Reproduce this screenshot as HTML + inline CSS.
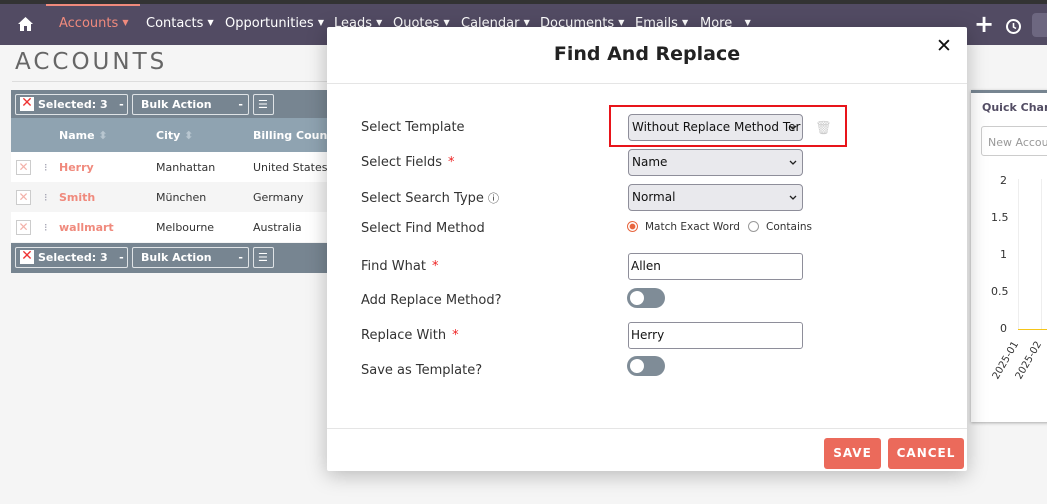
<!DOCTYPE html><html><head><style>
*{box-sizing:border-box;margin:0;padding:0}
body{width:1047px;height:504px;overflow:hidden;background:#f5f5f5;font-family:"DejaVu Sans","Liberation Sans",sans-serif;position:relative;font-size:12px;color:#333}
.abs{position:absolute;white-space:nowrap}
.nav{left:0;top:0;width:1047px;height:45px;background:#524b63;border-top:4px solid #333}
.nav span{position:absolute;top:12px;color:#fff;font-size:13px}
.nav span i{font-style:normal;font-size:8px;vertical-align:2px}
.tb{background:#778591;left:11px;width:316px;height:28px}
.btn{position:absolute;top:4px;height:21px;border:1px solid #dfe3e6;border-radius:2px;color:#fff;font-weight:bold;font-size:11px;line-height:19px;padding-left:8px}
.row{left:11px;width:316px;height:30px;font-size:11px;overflow:hidden}
.row span{position:absolute;top:9px}
.xb{position:absolute;left:5px;top:8px;width:15px;height:15px;border:1px solid #ccc;background:#fff;color:#f3b1a9;font-size:12px;line-height:13px;text-align:center}
.lbl{position:absolute;left:361px;top:1px;font-size:13px;color:#333}
.sel{position:absolute;left:628px;width:175px;height:27px;border:1px solid #8e8e9a;border-radius:4px;background:#e9e9ed;font-size:12px;line-height:25px;padding-left:3px;color:#111;overflow:hidden;white-space:nowrap}
.sel svg{position:absolute;right:5px;top:10px}
.inp{position:absolute;left:628px;width:175px;height:27px;border:1px solid #8e8e9a;border-radius:3px;background:#fff;font-size:12px;line-height:25px;padding-left:2px;color:#111}
.tog{position:absolute;left:627px;width:38px;height:20px;border-radius:10px;background:#7f8c97}
.tog:after{content:"";position:absolute;left:3px;top:3px;width:14px;height:14px;border-radius:50%;background:#fff}
.req{color:#e22;margin-left:6px}
.fb{position:absolute;top:437px;height:31px;background:#eb6a5b;color:#fff;font-weight:bold;font-size:12px;letter-spacing:1px;text-align:center;line-height:31px;border-radius:3px}
</style></head><body>
<div class="abs nav">
<svg class="abs" style="left:17px;top:12px" width="17" height="16" viewBox="0 0 17 16"><path d="M8.5 1L1 8h2v7h4v-5h3v5h4V8h2z" fill="#fff"/></svg>
<div class="abs" style="left:46px;top:0;width:94px;height:2px;background:#f08a7d"></div>
<span style="left:59px;color:#f08a7d">Accounts <i>▼</i></span>
<span style="left:146px">Contacts <i>▼</i></span>
<span style="left:225px">Opportunities <i>▼</i></span>
<span style="left:334px">Leads <i>▼</i></span>
<span style="left:393px">Quotes <i>▼</i></span>
<span style="left:461px">Calendar <i>▼</i></span>
<span style="left:540px">Documents <i>▼</i></span>
<span style="left:635px">Emails <i>▼</i></span>
<span style="left:700px">More &nbsp;&nbsp;<i>▼</i></span>
<span style="left:974px;top:6px;font-size:24px;font-weight:bold">+</span>
<svg class="abs" style="left:1005px;top:14px" width="17" height="17" viewBox="0 0 17 17"><circle cx="8.5" cy="8.5" r="6.5" fill="none" stroke="#fff" stroke-width="2"/><path d="M8.5 5v4l2.5 1.5" fill="none" stroke="#fff" stroke-width="1.6"/></svg>
<div class="abs" style="left:1032px;top:9px;width:20px;height:24px;background:#6d6780;border-radius:4px"></div>
</div>
<div class="abs" style="left:15px;top:49px;font-size:23px;letter-spacing:3px;color:#666">ACCOUNTS</div>
<div class="abs" style="left:12px;top:81px;width:320px;height:1px;background:#ddd"></div>
<div class="abs tb" style="top:90px">
<div class="btn" style="left:4px;width:113px;padding-left:22px">Selected: 3 &nbsp;&nbsp;-</div>
<div class="abs" style="left:9px;top:7px;width:14px;height:14px;background:#fff;color:#e33;font-size:14px;line-height:13px;text-align:center">✕</div>
<div class="btn" style="left:121px;width:117px">Bulk Action<span style="position:absolute;right:5px">-</span></div>
<div class="btn" style="left:242px;width:21px;padding-left:4px">☰</div>
</div>
<div class="abs" style="left:11px;top:118px;width:316px;height:34px;background:#8fa3b1;color:#fff;font-weight:bold;font-size:11px;overflow:hidden">
<span class="abs" style="left:48px;top:11px">Name <span style="color:#b8c6d0">⬍</span></span>
<span class="abs" style="left:145px;top:11px">City <span style="color:#b8c6d0">⬍</span></span>
<span class="abs" style="left:242px;top:11px">Billing Count</span></div>
<div class="abs row" style="top:152px;background:#fff"><div class="xb">✕</div><span style="left:33px;color:#99a">⁝</span><span style="left:48px;color:#f08a7d;font-weight:bold">Herry</span><span style="left:145px">Manhattan</span><span style="left:242px">United States</span></div>
<div class="abs row" style="top:182px;background:#f5f5f5"><div class="xb">✕</div><span style="left:33px;color:#99a">⁝</span><span style="left:48px;color:#f08a7d;font-weight:bold">Smith</span><span style="left:145px">München</span><span style="left:242px">Germany</span></div>
<div class="abs row" style="top:212px;background:#fff"><div class="xb">✕</div><span style="left:33px;color:#99a">⁝</span><span style="left:48px;color:#f08a7d;font-weight:bold">wallmart</span><span style="left:145px">Melbourne</span><span style="left:242px">Australia</span></div>
<div class="abs tb" style="top:243px;height:30px">
<div class="btn" style="left:4px;width:113px;padding-left:22px">Selected: 3 &nbsp;&nbsp;-</div>
<div class="abs" style="left:9px;top:7px;width:14px;height:14px;background:#fff;color:#e33;font-size:14px;line-height:13px;text-align:center">✕</div>
<div class="btn" style="left:121px;width:117px">Bulk Action<span style="position:absolute;right:5px">-</span></div>
<div class="btn" style="left:242px;width:21px;padding-left:4px">☰</div>
</div>
<div class="abs" style="left:971px;top:90px;width:80px;height:332px;background:#fff;border-top:3px solid #778591;box-shadow:0 1px 3px #aaa;overflow:hidden">
<div class="abs" style="left:11px;top:8px;font-size:11px;font-weight:bold;color:#534d64">Quick Char</div>
<div class="abs" style="left:10px;top:33px;width:80px;height:30px;border:1px solid #ccc;border-radius:3px;font-size:11px;color:#999;padding:9px 6px">New Accou</div>
<div class="abs" style="left:29px;top:81px;font-size:11px">2</div>
<div class="abs" style="left:20px;top:118px;font-size:11px">1.5</div>
<div class="abs" style="left:29px;top:155px;font-size:11px">1</div>
<div class="abs" style="left:20px;top:192px;font-size:11px">0.5</div>
<div class="abs" style="left:29px;top:229px;font-size:11px">0</div>
<div class="abs" style="left:47px;top:86px;width:1px;height:150px;background:#eee"></div>
<div class="abs" style="left:70px;top:86px;width:1px;height:150px;background:#eee"></div>
<div class="abs" style="left:47px;top:236px;width:40px;height:1px;background:#f5c518"></div>
<div class="abs" style="left:14px;top:262px;font-size:10px;transform:rotate(-60deg)">2025-01</div>
<div class="abs" style="left:37px;top:262px;font-size:10px;transform:rotate(-60deg)">2025-02</div>
</div>
<div class="abs" style="left:327px;top:27px;width:640px;height:444px;background:#fff;box-shadow:0 4px 20px rgba(0,0,0,.25);border-radius:2px">
<div class="abs" style="left:0;top:16px;width:640px;text-align:center;font-size:19px;font-weight:bold;color:#222">Find And Replace</div>
<div class="abs" style="left:609px;top:8px;font-size:19px;font-weight:bold;color:#111">✕</div>
<div class="abs" style="left:0;top:56px;width:640px;height:1px;background:#e5e5e5"></div>
<div class="abs" style="left:0;top:401px;width:640px;height:1px;background:#e5e5e5"></div>
</div>
<div class="lbl" style="top:120px">Select Template</div>
<div class="lbl" style="top:155px">Select Fields<span class="req">*</span></div>
<div class="lbl" style="top:190px">Select Search Type <span style="font-size:11px">ⓘ</span></div>
<div class="lbl" style="top:221px">Select Find Method</div>
<div class="lbl" style="top:259px">Find What<span class="req">*</span></div>
<div class="lbl" style="top:293px">Add Replace Method?</div>
<div class="lbl" style="top:328px">Replace With<span class="req">*</span></div>
<div class="lbl" style="top:363px">Save as Template?</div>
<div class="abs" style="left:609px;top:105px;width:238px;height:42px;border:2px solid #e8141a"></div>
<div class="sel" style="top:114px;padding-right:16px"><span style="display:block;overflow:hidden;width:170px">Without Replace Method Ter</span><svg width="8" height="5" viewBox="0 0 8 5"><path d="M1 1l3 3 3-3" fill="none" stroke="#222" stroke-width="1.3"/></svg></div>
<div class="abs" style="left:815px;top:121px;color:#ccc;font-size:13px">🗑</div>
<div class="sel" style="top:149px">Name<svg width="8" height="5" viewBox="0 0 8 5"><path d="M1 1l3 3 3-3" fill="none" stroke="#222" stroke-width="1.3"/></svg></div>
<div class="sel" style="top:184px">Normal<svg width="8" height="5" viewBox="0 0 8 5"><path d="M1 1l3 3 3-3" fill="none" stroke="#222" stroke-width="1.3"/></svg></div>
<div class="abs" style="left:627px;top:221px;width:11px;height:11px;border-radius:50%;border:1px solid #e8663f;background:radial-gradient(#e8663f 40%,#fff 50%)"></div>
<div class="abs" style="left:645px;top:221px;font-size:10.5px">Match Exact Word</div>
<div class="abs" style="left:748px;top:221px;width:11px;height:11px;border-radius:50%;border:1px solid #999"></div>
<div class="abs" style="left:766px;top:221px;font-size:10.5px">Contains</div>
<div class="inp" style="top:253px">Allen</div>
<div class="tog" style="top:288px"></div>
<div class="inp" style="top:322px">Herry</div>
<div class="tog" style="top:356px"></div>
<div class="fb" style="left:824px;width:57px;top:438px">SAVE</div>
<div class="fb" style="left:888px;width:76px;top:438px">CANCEL</div>
</body></html>
